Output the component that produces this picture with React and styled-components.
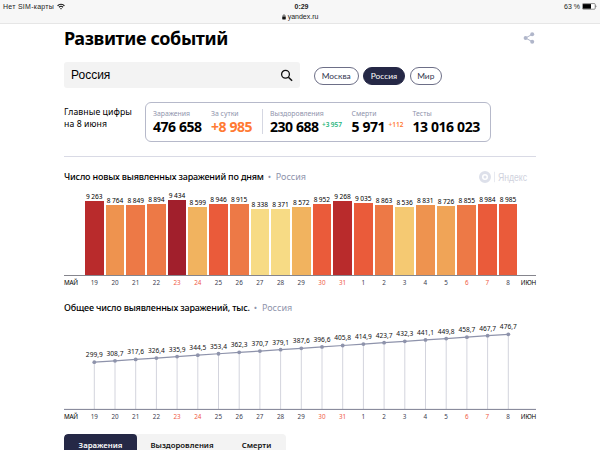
import React from 'react'
import styled, { createGlobalStyle } from 'styled-components'

const GlobalStyle = createGlobalStyle`
  * {
    box-sizing: border-box;
  }
  body {
    margin: 0;
    background: #fff;
    color: #000;
    font-family: "Noto Sans", "Open Sans", sans-serif;
  }
`

const Page = styled.div`
  width: 600px;
  height: 450px;
  overflow: hidden;
`

const StatusBar = styled.header`
  display: grid;
  grid-template-columns: 1fr 1fr 1fr;
  height: 24px;
  padding: 2px 3px 0;
  background: #f7f7f7;
  border-bottom: 1px solid #e6e6e6;
  font-family: "Liberation Sans", Arial, sans-serif;
  font-size: 7px;
  line-height: 9px;
  color: #222;
`

const StatusSide = styled.div`
  display: flex;
  align-items: center;
  justify-content: ${props => (props.$end ? 'flex-end' : 'flex-start')};
  gap: ${props => (props.$end ? '2px' : '3px')};
  height: 9px;
  letter-spacing: ${props => (props.$end ? '0' : '0.26px')};
`

const StatusCenter = styled.div`
  text-align: center;
`

const Clock = styled.div`
  padding-left: 3px;
  font-weight: 700;
  line-height: 9px;
`

const Address = styled.div`
  display: flex;
  align-items: center;
  justify-content: center;
  gap: 2px;
  height: 11px;
`

const Main = styled.main`
  padding: 0 64px;
`

const TitleRow = styled.div`
  display: flex;
  align-items: center;
  justify-content: space-between;
  height: 38px;
  padding: 0 1px 11px 0;
`

const Title = styled.h1`
  margin: 0;
  font-size: 18px;
  line-height: 26px;
  font-weight: 700;
  letter-spacing: -0.4px;
`

const Filters = styled.div`
  display: flex;
  align-items: center;
  height: 26px;
`

const Search = styled.div`
  display: flex;
  align-items: center;
  justify-content: space-between;
  width: 236px;
  height: 26px;
  margin-right: 14px;
  padding: 0 7px;
  border-radius: 3px;
  background: #f3f3f3;
  font-family: "Liberation Sans", Arial, sans-serif;
  font-size: 12px;
`

const Pill = styled.button`
  width: ${props => props.$width}px;
  height: 18px;
  margin: 2px 4.5px 0 0;
  padding: 0;
  border: 1px solid ${props => (props.$active ? '#252846' : '#6d6f87')};
  border-radius: 9px;
  background: ${props => (props.$active ? '#252846' : '#fff')};
  color: ${props => (props.$active ? '#fff' : '#33364f')};
  font-family: Lato, "Noto Sans", sans-serif;
  font-size: 8.4px;
  line-height: 15px;
  letter-spacing: 0;
`

const Summary = styled.section`
  display: flex;
  align-items: flex-start;
  margin-top: 14px;
`

const SummaryTitle = styled.div`
  width: 81px;
  padding-top: 4px;
  font-size: 8.7px;
  line-height: 12px;
  letter-spacing: 0.08px;
  white-space: nowrap;
`

const Figures = styled.div`
  display: flex;
  width: 345.5px;
  height: 40px;
  padding: 6px 0 0 7px;
  border: 1px solid #b6b9ca;
  border-radius: 6px;
`

const Figure = styled.div`
  width: ${props => props.$width}px;
  height: 26px;
  white-space: nowrap;
`

const FigureLabel = styled.div`
  font-size: 6.9px;
  line-height: 10px;
  color: #8f94ac;
`

const FigureValue = styled.div`
  display: flex;
  font-size: 14px;
  line-height: 15px;
  font-weight: 700;
  letter-spacing: -0.5px;
  word-spacing: 0.4px;
  color: ${props => props.$color || '#000'};
`

const Delta = styled.span`
  margin-left: 3.5px;
  font-size: 6.5px;
  line-height: 11px;
  font-weight: 600;
  letter-spacing: 0;
  word-spacing: -0.5px;
  color: ${props => props.$color};
`

const FigureDivider = styled.div`
  width: 1px;
  height: 25px;
  margin: 0 7px 0 0;
  background: #d5d7e2;
`

const Divider = styled.div`
  height: 1px;
  margin: 14px 0 11px;
  background: #d9dae5;
`

const ChartHeader = styled.div`
  display: flex;
  align-items: center;
  height: 17px;
  font-size: 9px;
  line-height: 17px;
  white-space: nowrap;
`

const ChartTitle = styled.h2`
  margin: 0;
  font-size: inherit;
  font-weight: 500;
  letter-spacing: -0.18px;
`

const Region = styled.span`
  margin-left: 4px;
  color: #8f94ac;
`

const LogoSlot = styled.div`
  margin-left: auto;
  height: 14px;
`

const Bars = styled.div`
  display: flex;
  align-items: flex-end;
  height: 91px;
  padding-left: 20px;
  border-bottom: 1px solid #85858d;
`

const BarColumn = styled.div`
  width: 20.7px;
  padding: 0 1px;
`

const BarValue = styled.div`
  margin: 0 -4px;
  font-size: 6.6px;
  line-height: 9px;
  text-align: center;
  word-spacing: -0.3px;
  white-space: nowrap;
`

const Bar = styled.div`
  height: ${props => props.$height}px;
  background: ${props => props.$color};
`

const Axis = styled.div`
  display: flex;
  height: 11px;
  font-size: 6.3px;
  line-height: 13px;
`

const Month = styled.div`
  width: ${props => (props.$end ? 'auto' : '20px')};
  margin-left: ${props => (props.$end ? 'auto' : '0')};
  letter-spacing: -0.2px;
`

const Day = styled.div`
  width: 20.7px;
  text-align: center;
  color: ${props => (props.$weekend ? '#ef5a45' : '#3b3d50')};
`

const LineHeader = styled(ChartHeader)`
  margin-top: 12px;
`

const LinePlot = styled.svg`
  display: block;
  width: 472px;
  height: 94px;
  font-size: 6.6px;
  font-family: "Noto Sans", sans-serif;
`

const Tabs = styled.nav`
  display: flex;
  width: 222px;
  height: 20px;
  margin-top: 13px;
  border-radius: 4px 4px 0 0;
  background: #f3f3f3;
  overflow: hidden;
`

const Tab = styled.button`
  width: ${props => props.$width}px;
  height: 23px;
  padding: 0;
  border: 0;
  border-radius: 4px 4px 0 0;
  background: ${props => (props.$active ? '#252846' : 'transparent')};
  color: ${props => (props.$active ? '#fff' : '#111')};
  font-family: inherit;
  font-size: 7.8px;
  font-weight: 600;
  line-height: 23px;
`

const LogoSvg = styled.svg`
  display: block;
  overflow: visible;
`

const days = [
  { day: 19, cases: 9263, total: 299.9, color: '#b92b2c' },
  { day: 20, cases: 8764, total: 308.7, color: '#ee934f' },
  { day: 21, cases: 8849, total: 317.6, color: '#ed7946' },
  { day: 22, cases: 8894, total: 326.4, color: '#ed7946' },
  { day: 23, cases: 9434, total: 335.9, color: '#a11f2c', weekend: true },
  { day: 24, cases: 8599, total: 344.5, color: '#f1b35f', weekend: true },
  { day: 25, cases: 8946, total: 353.4, color: '#ea5b3a' },
  { day: 26, cases: 8915, total: 362.3, color: '#ed7946' },
  { day: 27, cases: 8338, total: 370.7, color: '#f7db85' },
  { day: 28, cases: 8371, total: 379.1, color: '#f7db85' },
  { day: 29, cases: 8572, total: 387.6, color: '#f1b35f' },
  { day: 30, cases: 8952, total: 396.6, color: '#ea5b3a', weekend: true },
  { day: 31, cases: 9268, total: 405.8, color: '#b92b2c', weekend: true },
  { day: 1, cases: 9035, total: 414.9, color: '#ea5b3a' },
  { day: 2, cases: 8863, total: 423.7, color: '#ed7946' },
  { day: 3, cases: 8536, total: 432.3, color: '#f5c972' },
  { day: 4, cases: 8831, total: 441.1, color: '#ee934f' },
  { day: 5, cases: 8726, total: 449.8, color: '#f0a457' },
  { day: 6, cases: 8855, total: 458.7, color: '#ed7946', weekend: true },
  { day: 7, cases: 8984, total: 467.7, color: '#ea5b3a', weekend: true },
  { day: 8, cases: 8985, total: 476.7, color: '#ea5b3a' },
]

const formatCases = n => `${Math.floor(n / 1000)} ${String(n % 1000).padStart(3, '0')}`
const formatTotal = n => n.toFixed(1).replace('.', ',')

const WifiIcon = () => (
  <svg width="8" height="7" viewBox="0 0 14 11" fill="none" stroke="#111" strokeWidth="1.9">
    <path d="M1 4.2a8.6 8.6 0 0 1 12 0" />
    <path d="M3.4 6.8a5.2 5.2 0 0 1 7.2 0" />
    <path d="M5.4 8.8 7 10.6l1.6-1.8a2.3 2.3 0 0 0-3.2 0z" fill="#111" stroke="none" />
  </svg>
)

const LockIcon = () => (
  <svg width="4" height="6" viewBox="0 0 8 12">
    <rect x="0.5" y="5" width="7" height="6" rx="0.8" fill="#111" />
    <path d="M2 5.5V3.6a2 2 0 0 1 4 0v1.9" fill="none" stroke="#111" strokeWidth="1.3" />
  </svg>
)

const BatteryIcon = () => (
  <svg width="15" height="7" viewBox="0 0 15 7">
    <rect x="0.4" y="0.6" width="12.8" height="5.6" rx="0.9" fill="#fff" stroke="#444" strokeWidth="0.6" />
    <rect x="1" y="1.1" width="8" height="4.6" fill="#000" />
    <path d="M13.6 2.3c1 .3 1 1.9 0 2.2z" fill="#444" />
  </svg>
)

const ShareIcon = () => (
  <svg width="12" height="12" viewBox="0 0 12 12" fill="#b0b6ca" stroke="#b0b6ca">
    <path d="M9.2 2.3 2.6 6l6.6 3.7" fill="none" strokeWidth="1" />
    <circle cx="2.6" cy="6" r="2" stroke="none" />
    <circle cx="9.2" cy="2.3" r="2" stroke="none" />
    <circle cx="9.2" cy="9.7" r="2" stroke="none" />
  </svg>
)

const SearchIcon = () => (
  <svg width="13" height="13" viewBox="0 0 13 13" fill="none" stroke="#111" strokeWidth="1.3">
    <circle cx="5.5" cy="5.3" r="3.9" />
    <path d="m8.4 8.2 3.7 3.6" strokeWidth="1.5" />
  </svg>
)

const YandexLogo = () => (
  <LogoSvg width="58" height="14" viewBox="0 0 58 14">
    <circle cx="7" cy="7" r="4.5" fill="none" stroke="#dde0ea" strokeWidth="3" />
    <circle cx="7" cy="7" r="1.5" fill="#dde0ea" />
    <path d="M16.5 1.8v10.4" stroke="#e2e4ec" strokeWidth="0.8" />
    <text
      x="20"
      y="11"
      fill="#cfd2dd"
      fontFamily="Liberation Sans, Arial, sans-serif"
      fontSize="11.5"
      textLength="29"
      lengthAdjust="spacingAndGlyphs"
    >
      Яндекс
    </text>
  </LogoSvg>
)

const DaysAxis = () => (
  <Axis>
    <Month>МАЙ</Month>
    {days.map(d => (
      <Day key={d.day} $weekend={d.weekend}>{d.day}</Day>
    ))}
    <Month $end>ИЮН</Month>
  </Axis>
)

const CasesChart = () => (
  <Bars>
    {days.map(d => (
      <BarColumn key={d.day}>
        <BarValue>{formatCases(d.cases)}</BarValue>
        <Bar $height={d.cases * 0.00794} $color={d.color} />
      </BarColumn>
    ))}
  </Bars>
)

const TotalChart = () => {
  const points = days.map((d, i) => ({ ...d, x: 30.3 + i * 20.7, y: 93.6 - d.total * 0.158 }))
  return (
    <LinePlot viewBox="0 0 472 94">
      {points.map(p => (
        <line key={p.day} x1={p.x} x2={p.x} y1={p.y} y2="93" stroke="#d3d4dd" strokeWidth="1" />
      ))}
      <line x1="0" x2="472" y1="93.4" y2="93.4" stroke="#7d7f92" strokeWidth="1" />
      <polyline points={points.map(p => `${p.x},${p.y}`).join(' ')} fill="none" stroke="#8e93ab" strokeWidth="1.2" />
      {points.map(p => (
        <g key={p.day}>
          <circle cx={p.x} cy={p.y} r="1.9" fill="#8e93ab" />
          <text x={p.x} y={p.y - 5} textAnchor="middle" fill="#111">{formatTotal(p.total)}</text>
        </g>
      ))}
    </LinePlot>
  )
}

const App = () => (
  <>
    <GlobalStyle />
    <Page>
      <StatusBar>
        <StatusSide>Нет SIM-карты <WifiIcon /></StatusSide>
        <StatusCenter>
          <Clock>0:29</Clock>
          <Address><LockIcon />yandex.ru</Address>
        </StatusCenter>
        <StatusSide $end>63 % <BatteryIcon /></StatusSide>
      </StatusBar>
      <Main>
        <TitleRow>
          <Title>Развитие событий</Title>
          <ShareIcon />
        </TitleRow>
        <Filters>
          <Search>Россия <SearchIcon /></Search>
          <Pill $width={44.5}>Москва</Pill>
          <Pill $width={42} $active>Россия</Pill>
          <Pill $width={32.5}>Мир</Pill>
        </Filters>
        <Summary>
          <SummaryTitle>Главные цифры<br />на 8 июня</SummaryTitle>
          <Figures>
            <Figure $width={58}>
              <FigureLabel>Заражения</FigureLabel>
              <FigureValue>476 658</FigureValue>
            </Figure>
            <Figure $width={51}>
              <FigureLabel>За сутки</FigureLabel>
              <FigureValue $color="#ff7a33">+8 985</FigureValue>
            </Figure>
            <FigureDivider />
            <Figure $width={81.5}>
              <FigureLabel>Выздоровления</FigureLabel>
              <FigureValue>230 688<Delta $color="#1fb57c">+3 957</Delta></FigureValue>
            </Figure>
            <Figure $width={61}>
              <FigureLabel>Смерти</FigureLabel>
              <FigureValue>5 971<Delta $color="#ff7a33">+112</Delta></FigureValue>
            </Figure>
            <Figure $width={70}>
              <FigureLabel>Тесты</FigureLabel>
              <FigureValue>13 016 023</FigureValue>
            </Figure>
          </Figures>
        </Summary>
        <Divider />
        <ChartHeader>
          <ChartTitle>Число новых выявленных заражений по дням</ChartTitle>
          <Region>•&nbsp; Россия</Region>
          <LogoSlot><YandexLogo /></LogoSlot>
        </ChartHeader>
        <CasesChart />
        <DaysAxis />
        <LineHeader>
          <ChartTitle>Общее число выявленных заражений, тыс.</ChartTitle>
          <Region>•&nbsp; Россия</Region>
        </LineHeader>
        <TotalChart />
        <DaysAxis />
        <Tabs>
          <Tab $width={73} $active>Заражения</Tab>
          <Tab $width={90}>Выздоровления</Tab>
          <Tab $width={59}>Смерти</Tab>
        </Tabs>
      </Main>
    </Page>
  </>
)

export default App
